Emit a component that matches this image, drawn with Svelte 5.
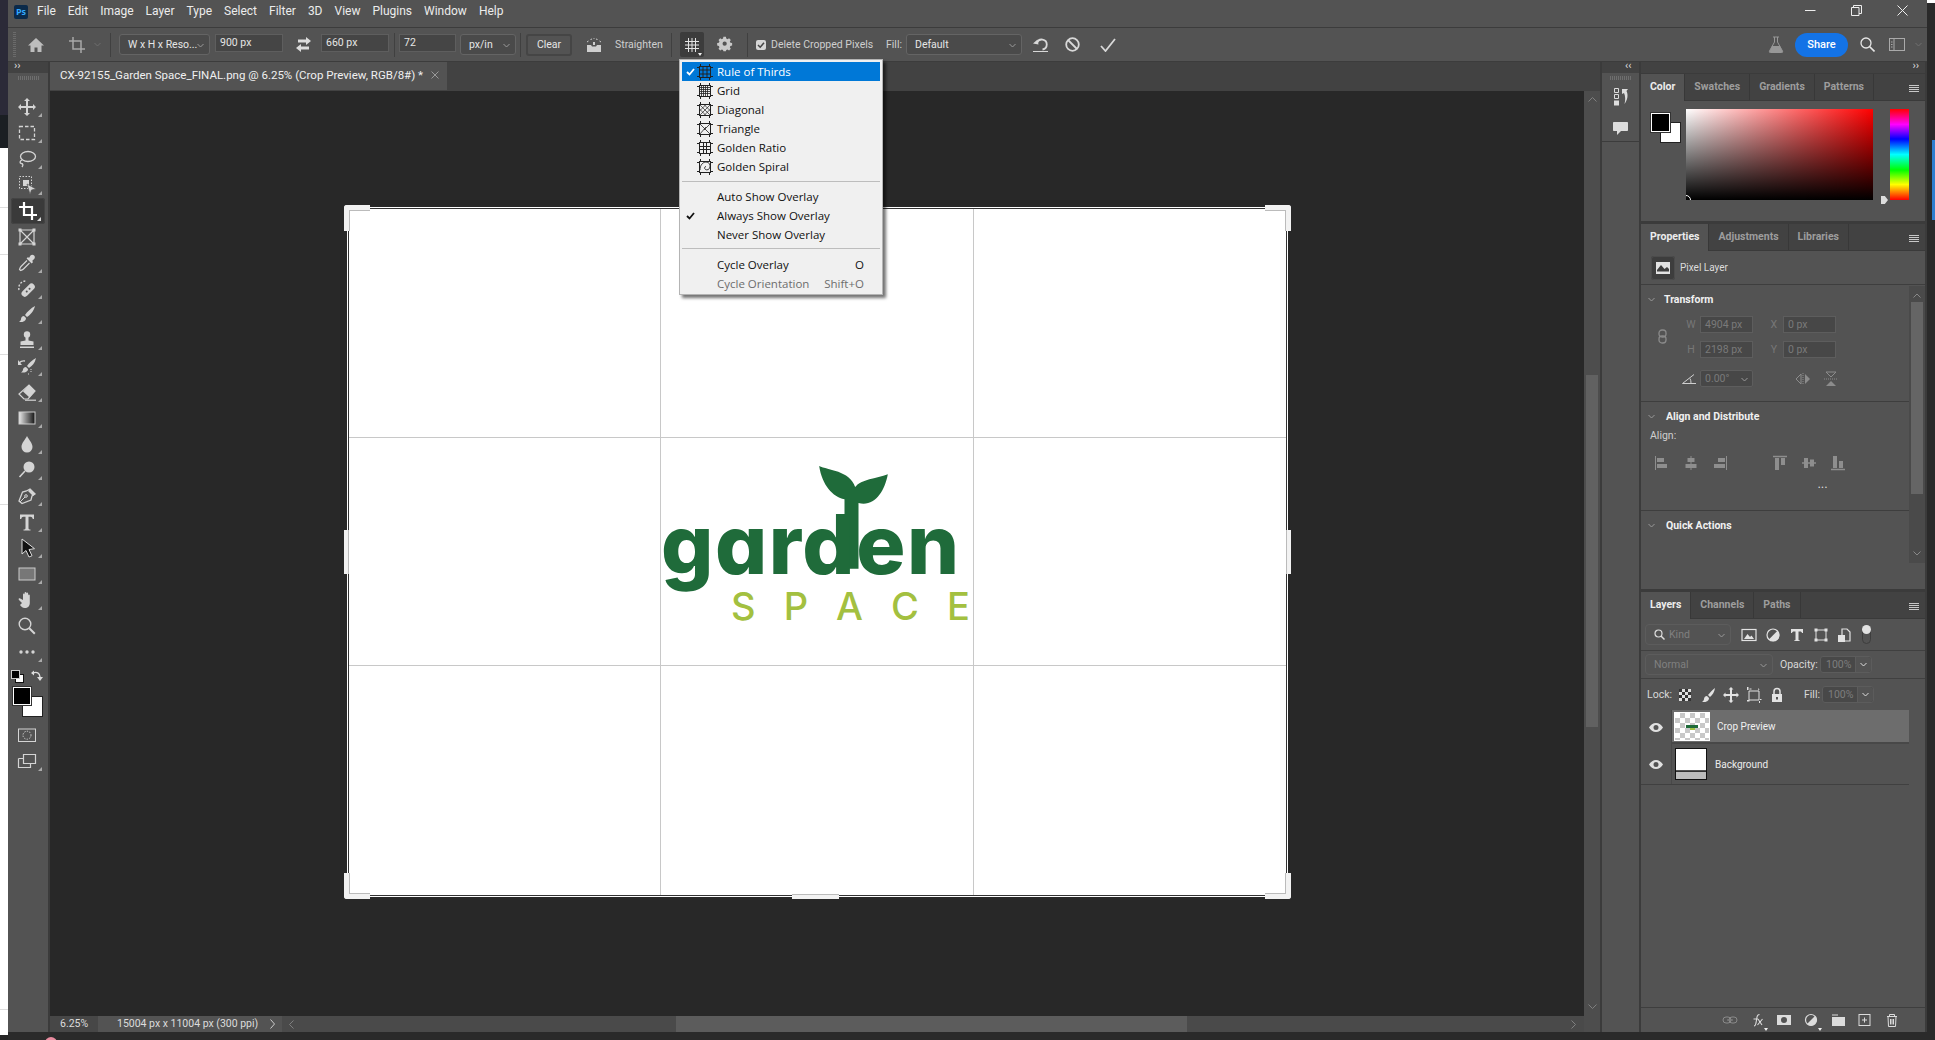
<script>
  const menus = ['File','Edit','Image','Layer','Type','Select','Filter','3D','View','Plugins','Window','Help'];

  const ic = {
    move:'<path fill="currentColor" d="M10 1l3 3h-2v5h5V7l3 3-3 3v-2h-5v5h2l-3 3-3-3h2v-5H4v2l-3-3 3-3v2h5V4H7z"/>',
    marquee:'<rect x="2.500" y="3.500" width="15" height="13" fill="none" stroke="currentColor" stroke-width="1.300" stroke-dasharray="3.500 2"/>',
    lasso:'<ellipse cx="11" cy="7.500" rx="7.500" ry="5" fill="none" stroke="currentColor" stroke-width="1.300"/><path d="M5 11c-2.500 1-2.500 3-.5 3.500 1.500.3 2 1.500.5 3.500" fill="none" stroke="currentColor" stroke-width="1.300"/>',
    obj:'<rect x="2.500" y="1.500" width="12" height="12" fill="none" stroke="currentColor" stroke-dasharray="1.500 1.500"/><rect x="6" y="5" width="6" height="6" fill="currentColor"/><path d="M10 9l9 5-4.500 1-1.500 4.500z" fill="currentColor" stroke="#535353" stroke-width=".7"/>',
    crop:'<path d="M6 1v13h13M1 6h13v13" fill="none" stroke="#fff" stroke-width="2.200"/>',
    frame:'<path d="M3 3h14v14H3zM3 3l14 14M17 3L3 17" fill="none" stroke="currentColor" stroke-width="1.200"/><path fill="currentColor" d="M1.500 1.500h3v3h-3zM15.500 1.500h3v3h-3zM1.500 15.500h3v3h-3zM15.500 15.500h3v3h-3z"/>',
    dropper:'<path fill="currentColor" d="M13.500 2.500c1-1 2.600-1 3.600 0s1 2.600 0 3.600l-2 2 1 1-1.500 1.500-5-5L11 4l1 1z"/><path d="M10 7.500l-6 6c-1 1-1 2-1.500 3l1 1c1-.5 2-.5 3-1.500l6-6" fill="none" stroke="currentColor" stroke-width="1.200"/>',
    heal:'<g transform="rotate(-45 11 11)"><rect x="3" y="8" width="16" height="6.500" rx="3.200" fill="currentColor"/><circle cx="9" cy="11.200" r="1" fill="#535353"/><circle cx="13" cy="11.200" r="1" fill="#535353"/></g><path d="M2 11C1 6 4 2 9 2" fill="none" stroke="currentColor" stroke-width="1.400" stroke-dasharray="2 1.500"/>',
    brush:'<path fill="currentColor" d="M18 2C14 4 10 8 8 11l2 2c3-2 7-6 8-11zM7 12c-2 0-3 1.500-3 3 0 1-.6 2-2 3 3 .5 7-.5 7-4z"/>',
    stamp:'<circle cx="10" cy="4.500" r="3.200" fill="currentColor"/><path fill="currentColor" d="M8.500 7h3v3.500l5 1V15h-13v-3.500l5-1zM3 16.500h14V18H3z"/>',
    history:'<path fill="currentColor" d="M19 2c-4 2-7 5-9 8l2 2c3-2 6-5 7-10zM9 11c-2 0-3 1.500-3 2.500 0 1-.6 2-2 3 3 .5 7-.5 7-3.500z"/><path d="M8 5c-2-.5-4 0-6 2" fill="none" stroke="currentColor" stroke-width="1.300"/><path fill="currentColor" d="M1 4l4 5H1z"/><path d="M14 13v3m-2 2h-2" stroke="currentColor" stroke-dasharray="1 1" fill="none"/>',
    eraser:'<path d="M2 12l5 5h4l7-8-6-6z" fill="none" stroke="currentColor" stroke-width="1.200"/><path fill="currentColor" d="M12 3l6 6-5.500 6.500-6.500-6z"/><path d="M8 18.200h11" stroke="currentColor" stroke-width="1.200"/>',
    gradient:'<defs><linearGradient id="gr"><stop offset="0" stop-color="#e8e8e8"/><stop offset="1" stop-color="#111"/></linearGradient></defs><rect x="2" y="4" width="16" height="12" fill="url(#gr)" stroke="#ccc"/>',
    drop:'<path fill="currentColor" d="M10 2c2 4 5.500 7 5.500 11a5.500 5.500 0 0 1-11 0C4.500 9 8 6 10 2z"/>',
    dodge:'<circle cx="12" cy="7" r="5.500" fill="currentColor"/><path d="M8 11l-5.500 6" stroke="currentColor" stroke-width="1.600"/>',
    pen:'<path d="M13 3l5 5-3 2-1 4-9 3.500L2 15 5.500 6 9.500 5z" fill="none" stroke="currentColor" stroke-width="1.300"/><path d="M13 3l5 5-2 2-5-5z" fill="currentColor"/><path d="M3 16l5-5" stroke="currentColor"/><circle cx="9" cy="10" r="1.300" fill="none" stroke="currentColor"/>',
    type:'<path fill="currentColor" d="M3 2.500h14V7h-1.200c-.4-1.500-1-2.300-2.300-2.300h-2v11.500c0 1 .6 1.200 2 1.200v1H6.500v-1c1.400 0 2-.2 2-1.200V4.700h-2c-1.300 0-1.900.8-2.300 2.300H3z"/>',
    path:'<path d="M5 1v15l4-3.500 3 6.500 3-1.300-3-6.200 5.500-.8z" fill="#111" stroke="#ddd" stroke-width="1"/>',
    rect:'<rect x="2" y="4" width="16" height="12" fill="#777" stroke="#ccc"/>',
    hand:'<path fill="currentColor" d="M5 13l-3-3c-1-1 0-2.200 1.200-1.500L6 10V4.500c0-1.200 1.600-1.200 1.600 0V9V3c0-1.200 1.800-1.200 1.800 0v6V3.500c0-1.200 1.700-1.200 1.700 0V10V5.500c0-1.200 1.700-1.200 1.700 0V13c0 3-2 5-5 5-2.500 0-3.700-1.500-4.800-3z"/>',
    zoom:'<circle cx="8" cy="8" r="5.800" fill="none" stroke="currentColor" stroke-width="1.400"/><path d="M12.300 12.300l5.500 5.500" stroke="currentColor" stroke-width="2"/>',
    dots:'<g fill="currentColor"><circle cx="4" cy="10" r="1.700"/><circle cx="10" cy="10" r="1.700"/><circle cx="16" cy="10" r="1.700"/></g>',
    qmask:'<rect x="1.500" y="4" width="17" height="12.500" fill="none" stroke="currentColor"/><circle cx="10" cy="10.200" r="4" fill="none" stroke="currentColor" stroke-dasharray="1.300 1.300"/>',
    screen:'<path d="M6.500 3.500h12v9h-12zM1.500 7.500h5M1.500 7.500v9h12v-4" fill="none" stroke="currentColor" stroke-width="1.200"/>'
  };

  const tools = [
    ['move',1],['marquee',1],['lasso',1],['obj',1],['crop',1,true],['frame',0],['dropper',1],['heal',1],['brush',1],['stamp',1],['history',1],['eraser',1],['gradient',1],['drop',1],['dodge',1],['pen',1],['type',1],['path',1],['rect',1],['hand',1],['zoom',0],['dots',1]
  ];

  const ticks = '<path d="M3.500 0v3M12.500 0v3M3.500 13v3M12.500 13v3M0 3.500h3M0 12.500h3M13 3.500h3M13 12.500h3" stroke="#222"/><rect x="2.500" y="2.500" width="11" height="11" fill="none" stroke="#222"/>';
  const overlay = [
    ['Rule of Thirds','<path d="M6 2.500v11M10 2.500v11M2.500 6h11M2.500 10h11" stroke="#222"/>',true],
    ['Grid','<path d="M4.500 2.500v11M6.500 2.500v11M8.500 2.500v11M10.500 2.500v11M2.500 4.500h11M2.500 6.500h11M2.500 8.500h11M2.500 10.500h11" stroke="#222" stroke-width=".8"/>'],
    ['Diagonal','<path d="M2.500 2.500l11 11M13.500 2.500l-11 11M2.500 7l6.500 6.500M7 2.500l6.500 6.500M13.500 7L7 13.500M9 2.500L2.500 9" stroke="#222" stroke-width=".7"/>'],
    ['Triangle','<path d="M2.500 2.500l11 11M2.500 13.500L9 6M13.500 2.500L7 9" stroke="#222" stroke-width=".8"/>'],
    ['Golden Ratio','<path d="M6.500 2.500v11M9.500 2.500v11M2.500 6.500h11M2.500 9.500h11" stroke="#222"/>'],
    ['Golden Spiral','<path d="M3 11c0-5 3-8 6-8s4.500 2.500 4 5-3 3.500-4.500 2.500-1-3 .5-3" fill="none" stroke="#222" stroke-width=".9"/>']
  ];

  const alignIcons = [
    '<path d="M1.500 1v14" stroke="currentColor"/><path fill="currentColor" d="M3 3h7v4H3zM3 9h10v4H3z"/>',
    '<path d="M8 1v14" stroke="currentColor"/><path fill="currentColor" d="M4.500 3h7v4h-7zM2.500 9h11v4h-11z"/>',
    '<path d="M14.500 1v14" stroke="currentColor"/><path fill="currentColor" d="M6 3h7v4H6zM2 9h11v4H2z"/>',
    '<path d="M1 1.500h14" stroke="currentColor" stroke-width="1.500"/><path fill="currentColor" d="M3 3h4v12H3zM9 3h4v7H9z"/>',
    '<path d="M1 8h14" stroke="currentColor" stroke-width="1.500"/><path fill="currentColor" d="M3 3h4v10H3zM9 4.500h4v7H9z"/>',
    '<path d="M1 14.500h14" stroke="currentColor" stroke-width="1.500"/><path fill="currentColor" d="M3 1h4v12H3zM9 6h4v7H9z"/>'
  ];
  const filterIcons = [
    '<rect x="1" y="2.500" width="14" height="11" fill="none" stroke="currentColor" stroke-width="1.200"/><path fill="currentColor" d="M3 12l3.500-5 2.500 3 1.500-1.500L13 12z"/>',
    '<circle cx="8" cy="8" r="6" fill="none" stroke="currentColor" stroke-width="1.200"/><path fill="currentColor" d="M12.500 3.800A6 6 0 0 1 3.800 12.500z"/>',
    '<path fill="currentColor" d="M2 2h12v4h-1c-.3-1-.8-1.500-1.800-1.500H9.500v8c0 .8.500 1 1.500 1V14H5v-.5c1 0 1.500-.2 1.500-1v-8H4.800C3.800 4.500 3.300 5 3 6H2z"/>',
    '<path d="M3 3h10v10H3z" fill="none" stroke="currentColor"/><path fill="currentColor" d="M1.500 1.500h3v3h-3zM11.500 1.500h3v3h-3zM1.500 11.500h3v3h-3zM11.500 11.500h3v3h-3z"/>',
    '<path d="M5 8V2h5l3 3v9H8" fill="none" stroke="currentColor" stroke-width="1.200"/><rect x="1" y="8" width="7" height="7" fill="currentColor"/>'
  ];
  const lockIcons = [
    '<path fill="#ddd" d="M2 2h12v12H2z"/><path fill="#333" d="M2 2h3v3H2zM8 2h3v3H8zM5 5h3v3H5zM11 5h3v3h-3zM2 8h3v3H2zM8 8h3v3H8zM5 11h3v3H5zM11 11h3v3h-3z"/>',
    '<path fill="currentColor" d="M15 1c-2.500 2-5 4.500-7 7l2 2c2.500-2 4.500-5 5-9zM7 9c-2 0-3 1.500-3 3 0 1-.6 2-2 3 3 .5 7-.5 7-4z"/>',
    '<path fill="currentColor" d="M8 0l2.500 2.500H9V7h4.500V5.500L16 8l-2.500 2.500V9H9v4.500h1.500L8 16l-2.500-2.500H7V9H2.500v1.500L0 8l2.500-2.500V7H7V2.500H5.500z"/>',
    '<path d="M3 4h10v9H3z" fill="none" stroke="currentColor"/><path fill="currentColor" d="M1 0h1.500v3H1zM3.500 1.500h2v1h-2zM12 1l1.500 1.500-1 1zM1 13h2.500v1.500H1zM14 12h1.500v1H14zM13 14h1v2h-1z"/>',
    '<path d="M5 7V4.500a3 3 0 0 1 6 0V7" fill="none" stroke="currentColor" stroke-width="1.500"/><path fill="currentColor" fill-rule="evenodd" d="M3 7h10v8H3zM7 10v2.500h2V10z"/>'
  ];
  const footIcons = [
    ['<rect x="1" y="5" width="8" height="6" rx="3" fill="none" stroke="#8a8a8a"/><rect x="7" y="5" width="8" height="6" rx="3" fill="none" stroke="#8a8a8a"/><path d="M5 8h6" stroke="#8a8a8a"/>',0],
    ['<path d="M5 14c1.500 0 1.500-1 2-3l1-6c.3-1.500 1-2.500 2.500-2.500M4.500 7H9M9 7l4 6M13.500 7L8.500 13" fill="none" stroke="currentColor" stroke-width="1.100"/>',1],
    ['<path fill="#dcdcdc" fill-rule="evenodd" d="M1 3h14v10H1zM8 5a3 3 0 1 0 0 6 3 3 0 0 0 0-6z"/>',0],
    ['<circle cx="8" cy="8" r="5.500" fill="none" stroke="currentColor" stroke-width="1.200"/><path fill="currentColor" d="M12 4A5.500 5.500 0 0 1 4 12z"/>',1],
    ['<path fill="#dcdcdc" d="M2 2.500h6v1H2zM2 5h13v9H2z"/>',0],
    ['<rect x="2" y="2.500" width="11" height="11" fill="none" stroke="currentColor"/><path d="M7.500 5.500v5M5 8h5" stroke="currentColor"/>',0],
    ['<path d="M3 4.500h10M5.500 4.500V2.500h5v2M4 4.500l.5 10h7l.5-10M6.500 7v5.500M8 7v5.500M9.500 7v5.500" fill="none" stroke="currentColor"/>',0]
  ];
</script>

{#snippet tabs(list)}
  <div class="tabs">
    {#each list as t, i}
      <div class="tab" class:on={i === 0}>{t}</div>
    {/each}
    <svg class="hamb" width="10" height="8" viewBox="0 0 10 8"><path d="M0 .5h10M0 2.500h10M0 4.500h10M0 6.500h10" stroke="#c8c8c8"/></svg>
  </div>
{/snippet}

{#snippet chev(cls)}
  <svg class={cls} width="7" height="5" viewBox="0 0 7 5"><path d="M.5 1l3 3 3-3" fill="none" stroke="#999"/></svg>
{/snippet}

<div class="app">
  <div class="edge-left">
    <div class="el-a"></div><div class="el-b"></div>
    <div class="el-w l1"></div><div class="el-w l2"></div><div class="el-w l3"></div><div class="el-w l4"></div><div class="el-w l5"></div><div class="el-w l6"></div>
    <div class="el-d"></div>
  </div>

  <div class="center">
    <div class="window">
      <header class="title">
        <div class="ps">Ps</div>
        <nav class="menus">{#each menus as m}<span>{m}</span>{/each}</nav>
        <div class="winbtns">
          <svg width="11" height="11" viewBox="0 0 11 11"><path d="M0 5.500h10.500" stroke="#eee"/></svg>
          <svg width="11" height="11" viewBox="0 0 11 11"><path d="M.5 2.500h7.500v8H.5zM2.500 2.500V.5h8v8H8" fill="none" stroke="#eee"/></svg>
          <svg width="11" height="11" viewBox="0 0 11 11"><path d="M.5.5l10 10M10.500.5l-10 10" stroke="#eee"/></svg>
        </div>
      </header>

      <div class="opts">
        <div class="grip ml5"></div>
        <svg class="ml12" width="16" height="16" viewBox="0 0 16 16"><path fill="#bdbdbd" d="M8 1L0 8.500h2.500V15h4v-4.500h3V15h4V8.500H16z"/></svg>
        <svg class="ml24" width="18" height="18" viewBox="0 0 18 18"><path d="M5 1v12h12M1 5h12v12" fill="none" stroke="#a8a8a8" stroke-width="1.500"/></svg>
        <svg class="ml8" width="7" height="5" viewBox="0 0 7 5"><path d="M.5 1l3 3 3-3" fill="none" stroke="#6e6e6e"/></svg>
        <div class="sep ml9"></div>
        <div class="sel w91 ml8">W x H x Reso...{@render chev('selchev')}</div>
        <div class="inp w68 ml5">900 px</div>
        <svg class="ml12" width="17" height="17" viewBox="0 0 17 17"><path fill="#dcdcdc" d="M11 1l5 4-5 4V6.500H3v-3h8zM6 8l-5 4 5 4v-2.500h8v-3H6z"/></svg>
        <div class="inp w68 ml9">660 px</div>
        <div class="sep ml5"></div>
        <div class="inp w57 ml4">72</div>
        <div class="sel w56 ml4">px/in{@render chev('selchev')}</div>
        <div class="sep ml4"></div>
        <div class="btn ml5">Clear</div>
        <svg class="ml13" width="18" height="18" viewBox="0 0 18 18"><path fill="#cfcfcf" d="M2 9h4l1 1.500h4L12 9h4v7H2z"/><path d="M2 6l1.500-1M5.500 3.500L7 3M9 2v.8M11 3l1.500.5M14.500 5L16 6" stroke="#cfcfcf"/><path fill="#cfcfcf" d="M8 6h2v3H8z"/></svg>
        <span class="otext ml12 w46">Straighten</span>
        <div class="sep ml10"></div>
        <div class="gridbtn ml8">
          <svg width="16" height="16" viewBox="0 0 16 16"><path d="M4.500 1v14M8 1v14M11.500 1v14M1 4.500h14M1 8h14M1 11.500h14" stroke="#e4e4e4"/></svg>
          <i class="mini"></i>
        </div>
        <svg class="ml13" width="18" height="18" viewBox="0 0 18 18"><path fill="#c9c9c9" fill-rule="evenodd" d="M7.500 1h3l.4 2 1.500.7 1.800-1.100 2 2-1.100 1.800.7 1.500 2 .4v3l-2 .4-.7 1.500 1.100 1.800-2 2-1.800-1.100-1.500.7-.4 1.400h-3l-.4-1.400-1.500-.7-1.800 1.100-2-2 1.100-1.800-.7-1.500-2-.4v-3l2-.4.700-1.500-1.100-1.800 2-2 1.800 1.100 1.500-.7zM9 6.500a2.500 2.500 0 1 0 0 5 2.500 2.500 0 0 0 0-5z" transform="scale(.85)"/></svg>
        <div class="sep ml12"></div>
        <svg class="ml8" width="10" height="10" viewBox="0 0 10 10"><rect width="10" height="10" rx="2" fill="#d6d6d6"/><path d="M2 5l2.200 2.200L8 2.800" fill="none" stroke="#444" stroke-width="1.500"/></svg>
        <span class="otext ml5 w96">Delete Cropped Pixels</span>
        <span class="otext ml19 w14">Fill:</span>
        <div class="sel w116 ml6">Default{@render chev('selchev')}</div>
        <svg class="ml10" width="17" height="17" viewBox="0 0 17 17"><path d="M5 7a5 5 0 1 1 5.500 6.500" fill="none" stroke="#d8d8d8" stroke-width="1.800"/><path fill="#d8d8d8" d="M1 7.500l4.500-4 1 5z"/><path d="M1 15.500h15" stroke="#d8d8d8"/></svg>
        <svg class="ml16" width="15" height="15" viewBox="0 0 15 15"><circle cx="7.500" cy="7.500" r="6.300" fill="none" stroke="#d8d8d8" stroke-width="1.800"/><path d="M3 3l9 9" stroke="#d8d8d8" stroke-width="1.800"/></svg>
        <svg class="ml20" width="16" height="14" viewBox="0 0 16 14"><path d="M1 8l4.500 5L15 1" fill="none" stroke="#d8d8d8" stroke-width="1.800"/></svg>
        <svg class="auto" width="16" height="17" viewBox="0 0 16 17"><path d="M5 1h6M6.500 1v5L1.500 15c-.3.8 0 1.500 1 1.500h11c1 0 1.300-.7 1-1.500l-5-9V1" fill="none" stroke="#979797"/><path fill="#979797" d="M4 10h8l3 6.500H1z"/></svg>
        <div class="share ml11">Share</div>
        <svg class="ml12" width="15" height="15" viewBox="0 0 15 15"><circle cx="6" cy="6" r="5" fill="none" stroke="#e6e6e6" stroke-width="1.300"/><path d="M9.500 9.500l5 5" stroke="#e6e6e6" stroke-width="1.600"/></svg>
        <svg class="ml14" width="16" height="13" viewBox="0 0 16 13"><rect x=".5" y=".5" width="15" height="12" fill="none" stroke="#aaa"/><path d="M5 .5v12" stroke="#aaa"/><path d="M2 4h1.500M2 6.500h1.500M2 9h1.500" stroke="#aaa"/></svg>
        <svg class="ml10 mr5" width="7" height="5" viewBox="0 0 7 5"><path d="M.5 1l3 3 3-3" fill="none" stroke="#707070"/></svg>
      </div>

      <div class="work">
        <aside class="tools">
          <div class="head"><span>››</span></div>
          <div class="gripbar"></div>
          <div class="toollist">
            {#each tools as [name, tri, active]}
              <div class="tool" class:active>
                <svg width="20" height="20" viewBox="0 0 20 20">{@html ic[name]}</svg>
                {#if tri}<i class="tri"></i>{/if}
              </div>
            {/each}
          </div>
          <div class="minicolors">
            <div class="defcol"><i class="db"></i><i class="df"></i></div>
            <svg width="12" height="12" viewBox="0 0 12 12"><path d="M2 3c4-1.500 6.500 0 7 4" fill="none" stroke="#ddd" stroke-width="1.400"/><path fill="#ddd" d="M3 .5v5L0 3zM6 7h6l-3 4z"/></svg>
          </div>
          <div class="bigcol"><i class="bb"></i><i class="bf"></i></div>
          <div class="tool q"><svg width="20" height="20" viewBox="0 0 20 20">{@html ic.qmask}</svg></div>
          <div class="tool q2"><svg width="20" height="20" viewBox="0 0 20 20">{@html ic.screen}</svg><i class="tri"></i></div>
        </aside>

        <main class="doc">
          <div class="tabbar">
            <div class="doctab">CX-92155_Garden Space_FINAL.png @ 6.25% (Crop Preview, RGB/8#) * <svg width="8" height="8" viewBox="0 0 8 8"><path d="M.5.5l7 7M7.500.5l-7 7" stroke="#999"/></svg></div>
          </div>
          <div class="docmid">
            <div class="pasteboard">
              <div class="image">
                {#each Array(9) as _}<div class="cell"></div>{/each}
                <div class="logo">
                  <svg class="leaf" viewBox="540 60 230 330" width="77" height="110"><path fill="#1f6b3a" d="M549 72C575 85 640 85 657 135 675 112 720 110 755 97 745 150 715 195 667 183V380H625V172C590 165 558 130 549 72Z"/></svg>
                  <div class="garden">garden</div>
                  <div class="space"><span>S</span><span>P</span><span>A</span><span>C</span><span>E</span></div>
                </div>
                <i class="hd tl"></i><i class="hd tr"></i><i class="hd bl"></i><i class="hd br"></i>
                <i class="mid ml"></i><i class="mid mr"></i><i class="mid mt"></i><i class="mid mb"></i>
              </div>
            </div>
            <div class="vscroll">
              <svg width="9" height="5" viewBox="0 0 9 5"><path d="M.5 4.500l4-4 4 4" fill="none" stroke="#808080"/></svg>
              <div class="vthumb"></div>
              <svg class="vdown" width="9" height="5" viewBox="0 0 9 5"><path d="M.5.5l4 4 4-4" fill="none" stroke="#808080"/></svg>
            </div>
          </div>
          <div class="status">
            <div class="zoomv">6.25%</div>
            <div class="dims">15004 px x 11004 px (300 ppi)<svg width="5" height="10" viewBox="0 0 5 10"><path d="M.5.5l4 4.500-4 4.500" fill="none" stroke="#ccc"/></svg></div>
            <div class="hscroll">
              <svg width="5" height="9" viewBox="0 0 5 9"><path d="M4.500.5l-4 4 4 4" fill="none" stroke="#808080"/></svg>
              <div class="hthumb"></div>
              <svg class="hright" width="5" height="9" viewBox="0 0 5 9"><path d="M.5.5l4 4-4 4" fill="none" stroke="#808080"/></svg>
            </div>
            <div class="corner"></div>
          </div>
        </main>

        <div class="strip">
          <div class="head right"><span>‹‹</span></div>
          <div class="stripbox">
            <div class="gripbar"></div>
            <svg class="sico" width="17" height="18" viewBox="0 0 17 18"><path d="M.5 .5h4v4h-4zM.5 6.500h4v4h-4z" fill="none" stroke="#ddd"/><path fill="#ddd" d="M0 12.500h5v5H0z"/><path d="M8 1h6l-1.500 2c2 4 1 9-2 13 1-4 1-8-.5-11L8 6z" fill="#ddd"/></svg>
            <svg class="sico2" width="15" height="13" viewBox="0 0 15 13"><path fill="#ddd" d="M1 0h13c.6 0 1 .4 1 1v7c0 .6-.4 1-1 1H8l-4 4V9H1C.4 9 0 8.600 0 8V1C0 .4.400 0 1 0z"/></svg>
          </div>
        </div>

        <section class="panels">
          <div class="head right2"><span>››</span></div>

          <div class="panel color">
            {@render tabs(['Color','Swatches','Gradients','Patterns'])}
            <div class="colorbody">
              <div class="swatch"><i class="sb"></i><i class="sf"></i></div>
              <div class="sv"><i class="svdot"></i></div>
              <div class="hue"><i class="huetri"></i></div>
            </div>
          </div>

          <div class="panel props">
            {@render tabs(['Properties','Adjustments','Libraries'])}
            <div class="pixrow">
              <div class="pixic"><svg width="14" height="12" viewBox="0 0 14 12"><path fill="#e2e2e2" fill-rule="evenodd" d="M0 0h14v12H0zM1 9.500h12V7l-2-2-2.500 2L5 3 1 8z"/></svg></div>
              <span>Pixel Layer</span>
            </div>
            <div class="propsbody">
              <div class="sections">
                <div class="sec tf">
                  <div class="sechead">{@render chev('secchev')}<b>Transform</b></div>
                  <div class="tfgrid">
                    <svg class="chain" width="9" height="15" viewBox="0 0 9 15"><rect x="1" y="1" width="7" height="7" rx="3" fill="none" stroke="#8a8a8a" stroke-width="1.300"/><rect x="1" y="7" width="7" height="7" rx="3" fill="none" stroke="#8a8a8a" stroke-width="1.300"/></svg>
                    <div class="tfrows">
                      <div class="tfrow"><span class="tl1">W</span><div class="dis">4904 px</div><span class="tl2">X</span><div class="dis">0 px</div></div>
                      <div class="tfrow"><span class="tl1">H</span><div class="dis">2198 px</div><span class="tl2">Y</span><div class="dis">0 px</div></div>
                      <div class="tfrow ang">
                        <svg class="angle" width="14" height="10" viewBox="0 0 14 10"><path d="M12 .5L.5 9.500H14M8 4.500c.8 1.200 1 3 1 5" fill="none" stroke="#cfcfcf"/></svg>
                        <div class="dis dd">0.00°{@render chev('ddchev')}</div>
                        <svg class="flip1" width="16" height="12" viewBox="0 0 16 12"><path d="M6 1v10L1 6z" fill="none" stroke="#8c8c8c"/><path fill="#8c8c8c" d="M10 1v10l5-5z"/><path d="M8 0v12" stroke="#8c8c8c" stroke-dasharray="1 1"/></svg>
                        <svg class="flip2" width="14" height="16" viewBox="0 0 14 16"><path d="M2 1h10L7 6z" fill="none" stroke="#8c8c8c"/><path fill="#8c8c8c" d="M2 15h10l-5-5z"/><path d="M0 8h14" stroke="#8c8c8c" stroke-dasharray="1 1"/></svg>
                      </div>
                    </div>
                  </div>
                </div>
                <div class="sec al">
                  <div class="sechead">{@render chev('secchev')}<b class="b2">Align and Distribute</b></div>
                  <div class="allabel">Align:</div>
                  <div class="alicons">
                    {#each alignIcons as a}<svg width="16" height="16" viewBox="0 0 16 16">{@html a}</svg>{/each}
                  </div>
                  <div class="more">•••</div>
                </div>
                <div class="sec qa">
                  <div class="sechead">{@render chev('secchev')}<b class="b2">Quick Actions</b></div>
                </div>
              </div>
              <div class="pscroll">
                <svg width="8" height="5" viewBox="0 0 8 5"><path d="M.5 4.500L4 1l3.500 3.500" fill="none" stroke="#888"/></svg>
                <div class="pthumb"></div>
                <svg class="pdown" width="8" height="5" viewBox="0 0 8 5"><path d="M.5.5L4 4l3.500-3.500" fill="none" stroke="#888"/></svg>
              </div>
            </div>
          </div>

          <div class="panel layers">
            {@render tabs(['Layers','Channels','Paths'])}
            <div class="lrow filter">
              <div class="kind">
                <svg width="11" height="11" viewBox="0 0 11 11"><circle cx="4.500" cy="4.500" r="3.500" fill="none" stroke="#ddd" stroke-width="1.200"/><path d="M7 7l3.500 3.500" stroke="#ddd" stroke-width="1.500"/></svg>
                <span>Kind</span>{@render chev('selchev')}
              </div>
              <div class="ficons">{#each filterIcons as f}<svg width="16" height="16" viewBox="0 0 16 16">{@html f}</svg>{/each}</div>
              <div class="toggle"><i></i></div>
            </div>
            <div class="lrow blend">
              <div class="normal">Normal{@render chev('selchev')}</div>
              <span class="lab op">Opacity:</span>
              <div class="pct">100%<em>{@render chev('pctchev')}</em></div>
            </div>
            <div class="lrow lock">
              <span class="lab lk">Lock:</span>
              <div class="lockicons">{#each lockIcons as l}<svg width="16" height="16" viewBox="0 0 16 16">{@html l}</svg>{/each}</div>
              <span class="lab fl">Fill:</span>
              <div class="pct">100%<em>{@render chev('pctchev')}</em></div>
            </div>
            <div class="list">
              <div class="layer one">
                <div class="eye"><svg width="14" height="9" viewBox="0 0 14 9"><path fill="#e0e0e0" fill-rule="evenodd" d="M7 0c3 0 5.500 2 7 4.500C12.500 7 10 9 7 9S1.500 7 0 4.500C1.500 2 4 0 7 0zM7 2a2.500 2.500 0 1 0 0 5 2.500 2.500 0 0 0 0-5z"/></svg></div>
                <div class="lbody sel1">
                  <div class="thumb1"><i class="tiny"></i><i class="tinyb"></i></div>
                  <span>Crop Preview</span>
                </div>
              </div>
              <div class="layer two">
                <div class="eye"><svg width="14" height="9" viewBox="0 0 14 9"><path fill="#e0e0e0" fill-rule="evenodd" d="M7 0c3 0 5.500 2 7 4.500C12.500 7 10 9 7 9S1.500 7 0 4.500C1.500 2 4 0 7 0zM7 2a2.500 2.500 0 1 0 0 5 2.500 2.500 0 0 0 0-5z"/></svg></div>
                <div class="lbody">
                  <div class="thumb2"><i></i></div>
                  <span>Background</span>
                </div>
              </div>
            </div>
            <div class="lfoot">
              {#each footIcons as [f, m]}
                <div class="fi"><svg width="16" height="16" viewBox="0 0 16 16">{@html f}</svg>{#if m}<i class="mini"></i>{/if}</div>
              {/each}
            </div>
          </div>
        </section>
      </div>
    </div>
    <div class="taskbar"><i class="pink"></i></div>
  </div>

  <div class="edge-right"><i class="er-w"></i><i class="er-blue"></i></div>

  <div class="popup">
    {#each overlay as [label, art, sel]}
      <div class="pi" class:hi={sel}>
        <span class="ck">{#if sel}<svg width="9" height="8" viewBox="0 0 9 8"><path d="M1 4l2.500 2.500L8 1" fill="none" stroke="#fff" stroke-width="1.800"/></svg>{/if}</span>
        <svg class="pic" width="16" height="16" viewBox="0 0 16 16">{@html ticks + art}</svg>
        <span class="pt">{label}</span>
      </div>
    {/each}
    <div class="psep"></div>
    <div class="pi"><span class="ck"></span><span class="noic"></span><span class="pt">Auto Show Overlay</span></div>
    <div class="pi"><span class="ck"><svg width="9" height="8" viewBox="0 0 9 8"><path d="M1 4l2.500 2.500L8 1" fill="none" stroke="#111" stroke-width="1.800"/></svg></span><span class="noic"></span><span class="pt">Always Show Overlay</span></div>
    <div class="pi"><span class="ck"></span><span class="noic"></span><span class="pt">Never Show Overlay</span></div>
    <div class="psep s2"></div>
    <div class="pi"><span class="ck"></span><span class="noic"></span><span class="pt">Cycle Overlay</span><span class="sc">O</span></div>
    <div class="pi dim"><span class="ck"></span><span class="noic"></span><span class="pt">Cycle Orientation</span><span class="sc">Shift+O</span></div>
  </div>
</div>

<style>
  :global(body){margin:0;overflow:hidden;background:#262626}
  .app{position:relative;width:1935px;height:1040px;display:flex;overflow:hidden;font-family:Roboto,"Noto Sans",sans-serif;color:#e4e4e4;font-size:11px}
  i{display:block;font-style:normal}

  .edge-left{width:8px;display:flex;flex-direction:column;flex:none}
  .el-a{height:115px;background:#2b2a38}
  .el-b{height:33px;background:#1b1f23}
  .el-w{background:#fff;border-bottom:1px solid #ddd}
  .l1{height:59px}.l2{height:46px}.l3{height:99px}.l4{height:149px}.l5{height:504px}.l6{height:25px;border:0}
  .el-d{flex:1;background:#262626}

  .center{width:1919px;display:flex;flex-direction:column;flex:none}
  .window{height:1032px;display:flex;flex-direction:column;background:#3b3b3b}
  .taskbar{flex:1;background:#2a2a2a;position:relative}
  .pink{position:absolute;left:37px;top:5px;width:12px;height:12px;border-radius:50%;background:#e98ca0}
  .edge-right{width:8px;flex:none;background:#2a2a2a;position:relative}
  .er-w{height:3px;background:#fff}
  .er-blue{position:absolute;left:5px;top:140px;width:3px;height:80px;background:#2f7fd0}

  .title{height:28px;box-sizing:border-box;background:#535353;border-bottom:1px solid #3c3c3c;display:flex;align-items:flex-start}
  .ps{width:14px;height:14px;margin:5px 0 0 6px;background:#0b2a4a;color:#31a8ff;font:700 9px/14px "Open Sans",sans-serif;text-align:center;border-radius:2px}
  .menus{display:flex;gap:12px;margin:3px 0 0 9px;font-size:12px;line-height:16px;color:#ececec}
  .winbtns{margin-left:auto;display:flex;gap:35px;padding:5px 19px 0 0}

  .opts{height:34px;box-sizing:border-box;background:#535353;border-bottom:1px solid #3c3c3c;display:flex;align-items:center;flex:none}
  .opts>*{flex:none}
  .ml4{margin-left:4px}.ml5{margin-left:5px}.ml6{margin-left:6px}.ml8{margin-left:8px}.ml9{margin-left:9px}.ml10{margin-left:10px}.ml11{margin-left:11px}.ml12{margin-left:12px}.ml13{margin-left:13px}.ml14{margin-left:14px}.ml16{margin-left:16px}.ml19{margin-left:19px}.ml20{margin-left:20px}.ml24{margin-left:24px}
  .mr5{margin-right:5px}.auto{margin-left:auto}
  .w14{width:14px}.w46{width:46px}.w56{width:56px}.w57{width:57px}.w68{width:68px}.w91{width:91px}.w96{width:96px}.w116{width:116px}
  .grip{width:3px;height:26px;background:repeating-linear-gradient(#6b6b6b 0 1px,transparent 1px 2px)}
  .sep{width:1px;height:24px;background:#404040}
  .sel{position:relative;height:21px;box-sizing:border-box;border:1px solid #646464;border-radius:3px;padding:0 8px;line-height:19px;font-size:10.500px;color:#e6e6e6;background:#4a4a4a}
  :global(.selchev){position:absolute;right:5px;top:8px}
  .inp{height:18px;box-sizing:border-box;background:#454545;border:1px solid #5e5e5e;padding:0 4px;line-height:16px;font-size:10.500px;color:#e6e6e6;margin-bottom:3px}
  .btn{width:46px;height:22px;box-sizing:border-box;border:2px solid #454545;border-radius:3px;text-align:center;line-height:18px;font-size:10.500px;color:#e6e6e6}
  .otext{font-size:10.500px;color:#cfcfcf;white-space:nowrap}
  .gridbtn{width:24px;height:25px;background:#3c3c3c;border-radius:2px;display:flex;align-items:center;justify-content:center;position:relative}
  .mini{position:absolute;right:2px;bottom:1px;width:0;height:0;border:2.500px solid transparent;border-top:3px solid #eee;border-bottom:0}
  .share{width:53px;height:24px;border-radius:12px;background:#1473e6;color:#fff;text-align:center;line-height:24px;font-size:11px;font-weight:500}

  .work{flex:1;display:flex;gap:2px;min-height:0}
  .head{height:11px;background:#424242;font-size:11px;line-height:8px;color:#ddd;padding-left:6px;flex:none}
  .head.right{padding-left:23px}
  .head.right2{text-align:right;padding-right:6px}

  .tools{width:40px;flex:none;background:#535353;display:flex;flex-direction:column}
  .gripbar{height:4px;margin:3px auto 0;width:21px;background:repeating-linear-gradient(90deg,#6e6e6e 0 1px,transparent 1px 2px);flex:none}
  .toollist{padding-top:14px}
  .tool{position:relative;height:25.950px;display:flex;align-items:center;justify-content:center;color:#d4d4d4;padding-right:2px}
  .tool.active{background:#3a3a3a;border-radius:3px;margin:0 3px;padding-right:0;box-shadow:0 0 0 1px #444 inset}
  .tri{position:absolute;right:6px;bottom:3px;width:0;height:0;border-style:solid;border-width:0 0 4px 4px;border-color:transparent transparent #aaa transparent}
  .active .tri{right:4px;border-bottom-color:#ddd}
  .minicolors{display:flex;align-items:center;gap:8px;padding:4px 0 0 3px;height:14px;flex:none}
  .defcol{position:relative;width:12px;height:12px}
  .db{position:absolute;left:4px;top:4px;width:7px;height:7px;background:#fff;border:1px solid #111}
  .df{position:absolute;left:0;top:0;width:7px;height:7px;background:#000;border:1px solid #ccc}
  .bigcol{position:relative;height:30px;margin-top:4px;flex:none}
  .bb{position:absolute;left:14px;top:9px;width:19px;height:19px;background:#fff;border:1px solid #222}
  .bf{position:absolute;left:5px;top:0;width:16px;height:16px;background:#000;border:1px solid #fff;box-shadow:0 0 0 1px #333}
  .q{margin-top:5px}

  .doc{width:1550px;flex:none;display:flex;flex-direction:column}
  .tabbar{height:29px;background:#424242;flex:none}
  .doctab{width:397px;height:28px;box-sizing:border-box;background:#535353;font-size:11.500px;line-height:27px;padding-left:10px;color:#f0f0f0;white-space:nowrap}
  .doctab svg{margin-left:5px}
  .docmid{flex:1;display:flex;min-height:0}
  .pasteboard{flex:1;background:#282828;position:relative}
  .vscroll{width:16px;background:#4d4d4d;display:flex;flex-direction:column;align-items:center;padding-top:6px;box-sizing:border-box}
  .vthumb{width:12px;height:352px;background:#616161;margin-top:273px}
  .vdown{margin-top:auto;margin-bottom:7px}
  .status{height:16px;display:flex;flex:none;font-size:10.500px;line-height:16px;color:#dcdcdc}
  .zoomv{width:38px;padding-left:10px;background:#474747}
  .dims{width:165px;padding-left:19px;background:#535353;position:relative;white-space:nowrap}
  .dims svg{position:absolute;right:7px;top:3px}
  .hscroll{flex:1;background:#4a4a4a;display:flex;align-items:center;padding:0 8px 0 7px}
  .hthumb{width:511px;height:16px;background:#5c5c5c;margin-left:382px}
  .hright{margin-left:auto}
  .corner{width:16px;background:#4d4d4d}

  .image{position:absolute;left:299px;top:118px;width:937px;height:686px;background:#fff;display:grid;grid-template-columns:repeat(3,1fr);grid-template-rows:repeat(3,1fr);box-shadow:0 0 0 1px #333,0 0 0 2px #fff}
  .cell{border-right:1px solid #c8c8c8;border-bottom:1px solid #c8c8c8}
  .cell:nth-child(3n){border-right:0}
  .cell:nth-child(n+7){border-bottom:0}
  .hd{position:absolute;width:21px;height:21px;border:solid #f2f2f2;border-width:0;box-sizing:content-box}
  .tl{left:-5px;top:-4px;border-left-width:5px;border-top-width:5px;border-top-left-radius:3px;box-shadow:inset 1px 1px 0 #bbb}
  .tr{right:-5px;top:-4px;border-right-width:5px;border-top-width:5px;border-top-right-radius:3px;box-shadow:inset -1px 1px 0 #bbb}
  .bl{left:-5px;bottom:-4px;border-left-width:5px;border-bottom-width:5px;border-bottom-left-radius:3px;box-shadow:inset 1px -1px 0 #bbb}
  .br{right:-5px;bottom:-4px;border-right-width:5px;border-bottom-width:5px;border-bottom-right-radius:3px;box-shadow:inset -1px -1px 0 #bbb}
  .mid{position:absolute;background:#f2f2f2}
  .ml,.mr{width:5px;height:44px;top:321px}
  .ml{left:-5px;box-shadow:inset -1px 0 0 #bbb}
  .mr{right:-5px;box-shadow:inset 1px 0 0 #bbb}
  .mt,.mb{height:5px;width:47px;left:443px}
  .mt{top:-4px}
  .mb{bottom:-4px;box-shadow:inset 0 1px 0 #bbb}

  .logo{position:absolute;left:314px;top:259px;width:307px;height:155px}
  .leaf{position:absolute;left:153px;top:-6px}
  .garden{position:absolute;left:-2px;top:27px;font:800 82px/100px Inter,sans-serif;font-feature-settings:"cv11";color:#1f6b3a;letter-spacing:1.500px;white-space:nowrap}
  .space{position:absolute;left:68px;top:124px;width:239px;display:flex;justify-content:space-between;font:500 38px/28px Inter,sans-serif;color:#a3c040}

  .strip{width:37px;flex:none;background:#424242;display:flex;flex-direction:column}
  .stripbox{flex:1;background:#535353;display:flex;flex-direction:column;align-items:center;position:relative}
  .stripbox::after{content:"";position:absolute;left:0;right:0;top:68px;height:1px;background:#3c3c3c}
  .sico{margin-top:8px;margin-left:4px}
  .sico2{margin-top:16px}

  .panels{width:284px;flex:none;display:flex;flex-direction:column;gap:0}
  .panel{background:#535353;display:flex;flex-direction:column;flex:none;box-sizing:border-box}
  .color{height:147px;margin-bottom:3px;margin-top:1px}
  .props{height:365px;margin-bottom:3px}
  .layers{flex:1}
  .tabs{height:27px;flex:none;display:flex;background:#424242;border-bottom:1px solid #3a3a3a;box-sizing:border-box;position:relative}
  .tab{padding:0 9px;line-height:26px;font-size:10.500px;font-weight:700;color:#9d9d9d;border-right:1px solid #383838}
  .tab.on{background:#535353;color:#ececec;margin-bottom:-1px}
  .hamb{position:absolute;right:6px;top:11px}

  .colorbody{position:relative;display:flex;padding:8px 0 0 45px;flex:1}
  .swatch{position:absolute;left:9px;top:11px;width:31px;height:31px}
  .sb{position:absolute;left:10px;top:10px;width:19px;height:19px;background:#fff;border:1px solid #222}
  .sf{position:absolute;left:1px;top:1px;width:17px;height:17px;background:#000;border:1px solid #fff;box-shadow:0 0 0 1px #333}
  .sv{width:187px;height:91px;position:relative;background:linear-gradient(to top,#000,transparent),linear-gradient(to right,#fff,#f00)}
  .svdot{position:absolute;left:-5px;bottom:-5px;width:8px;height:8px;border:1px solid #fff;border-radius:50%;clip-path:inset(0 0 5px 5px)}
  .hue{width:19px;height:91px;margin-left:17px;position:relative;background:linear-gradient(#f00 0,#f0f 17%,#00f 33%,#0ff 50%,#0f0 67%,#ff0 83%,#f00 100%)}
  .huetri{position:absolute;left:-9px;bottom:-4px;width:7px;height:8px;background:#ddd;clip-path:polygon(0 0,55% 0,100% 50%,55% 100%,0 100%)}

  .pixrow{height:34px;box-sizing:border-box;border-bottom:1px solid #3e3e3e;display:flex;align-items:center;padding-left:10px;font-size:10px;color:#dcdcdc;flex:none}
  .pixic{width:24px;height:24px;background:#3d3d3d;border-radius:3px;display:flex;align-items:center;justify-content:center;margin-right:5px;box-shadow:inset 0 0 0 1px #4c4c4c}
  .propsbody{flex:1;display:flex;min-height:0;align-items:flex-start}
  .sections{width:268px;flex:none}
  .pscroll{width:16px;height:277px;margin-top:1px;background:#4a4a4a;display:flex;flex-direction:column;align-items:center;padding-top:7px;box-sizing:border-box}
  .pthumb{width:12px;height:192px;background:#656565;margin-top:4px}
  .pdown{margin-top:auto;margin-bottom:7px}
  .sec{box-sizing:border-box;border-bottom:1px solid #3e3e3e}
  .tf{height:117px}.al{height:109px}.qa{border:0}
  .sechead{position:relative;height:30px;line-height:30px;padding-left:23px;font-size:10.500px;color:#f0f0f0}
  .sechead b{font-weight:700}
  .sechead .b2{margin-left:2px}
  :global(.secchev){position:absolute;left:7px;top:12px}
  .tfgrid{display:flex}
  .chain{margin:14px 0 0 17px}
  .tfrows{padding-left:15px;display:flex;flex-direction:column;gap:8px;margin-top:1px}
  .tfrow{display:flex;align-items:center;height:17px;font-size:10.500px;color:#777}
  .tl1{width:18px;text-align:center;margin-right:0}
  .tl2{width:30px;text-align:right;padding-right:6px;box-sizing:border-box}
  .dis{width:53px;height:17px;box-sizing:border-box;background:#474747;border:1px solid #5d5d5d;padding:0 4px;line-height:15px;color:#7a7a7a;position:relative}
  .ang{margin-top:4px;position:relative}
  .angle{margin-right:4px}
  .dd{border-radius:2px}
  :global(.ddchev){position:absolute;right:4px;top:6px}
  .flip1{margin-left:42px}
  .flip2{margin-left:13px}
  .allabel{padding-left:9px;font-size:10.500px;color:#cfcfcf;margin-top:-3px;line-height:14px}
  .alicons{display:flex;gap:13px;padding-left:13px;margin-top:12px;color:#8e8e8e}
  .alicons svg:nth-child(4){margin-left:31px}
  .more{margin:12px 0 0 177px;font-size:7px;letter-spacing:1px;color:#dedede;line-height:10px}

  .lrow{display:flex;align-items:center;box-sizing:border-box;border-bottom:1px solid #404040;flex:none}
  .filter{height:32px;padding-left:4px}
  .kind{position:relative;width:86px;height:21px;box-sizing:border-box;border:1px solid #5c5c5c;border-radius:4px;display:flex;align-items:center;padding-left:8px;gap:4px;color:#808080;font-size:10.500px}
  .ficons{display:flex;gap:8px;margin-left:10px;color:#e2e2e2}
  .toggle{width:9px;height:18px;border:1px solid #3d3d3d;border-radius:5px;margin-left:9px;position:relative;box-sizing:border-box}
  .toggle i{position:absolute;left:-1px;top:-2px;width:9px;height:9px;border-radius:50%;background:#e2e2e2}
  .blend{height:28px;padding-left:4px}
  .normal{position:relative;width:128px;height:21px;box-sizing:border-box;border:1px solid #5c5c5c;border-radius:4px;padding-left:8px;line-height:19px;color:#808080;font-size:10.500px}
  .lab{font-size:10.500px;color:#d8d8d8}
  .op{margin-left:7px;width:40px}
  .pct{width:52px;height:17px;box-sizing:border-box;border:1px solid #5c5c5c;border-radius:3px;background:#484848;line-height:15px;padding-left:5px;color:#7e7e7e;font-size:10.500px;position:relative}
  .pct em{position:absolute;right:0;top:0;bottom:0;width:15px;background:#535353;border-left:1px solid #5c5c5c;display:block;border-radius:0 3px 3px 0}
  :global(.pctchev){position:absolute;right:4px;top:5px}
  :global(.pctchev) path{stroke:#ddd}
  .lock{height:31px;padding-left:6px;border-bottom:0}
  .lk{width:30px}
  .lockicons{display:flex;gap:7px;color:#e2e2e2}
  .fl{margin-left:19px;width:18px}
  .list{flex:none;width:268px}
  .layer{display:flex}
  .one{height:34px}.two{height:40px;border-bottom:1px solid #404040}
  .eye{width:30px;display:flex;align-items:center;justify-content:center;flex:none}
  .lbody{flex:1;display:flex;align-items:center;font-size:10px;color:#ececec;border-left:1px solid #484848}
  .lbody span{margin-left:8px}
  .sel1{background:#6d6d6d;border-bottom:2px solid #484848;box-sizing:border-box;color:#f0f0f0}
  .thumb1{position:relative;width:34px;height:27px;margin-left:3px;background:repeating-conic-gradient(#c8c8c8 0 25%,#fff 0 50%) 0 0/10px 10px;box-shadow:0 0 0 1px #fff}
  .tiny{position:absolute;left:11px;top:12px;width:12px;height:3px;background:#1f6b3a}
  .tinyb{position:absolute;left:15px;top:15px;width:5px;height:2px;background:#a3c040}
  .thumb2{width:32px;height:32px;margin-left:3px;background:#fff;border:1px solid #111;box-sizing:border-box;position:relative}
  .thumb2 i{position:absolute;left:0;right:0;bottom:0;height:8px;background:#bdbdbd;border-top:1px solid #555;box-shadow:inset 0 2px 0 -1px #333}
  .lfoot{margin-top:auto;height:25px;box-sizing:border-box;border-top:1px solid #3e3e3e;display:flex;align-items:center;gap:11px;padding-left:81px;color:#dcdcdc}
  .fi{position:relative;width:16px;height:16px}
  .fi .mini{right:-3px;bottom:-3px}

  .popup{position:absolute;left:679px;top:59px;width:204px;height:236px;box-sizing:border-box;padding:2px;background:#f0f0f0;border:1px solid #b4b4b4;box-shadow:3px 3px 3px rgba(0,0,0,.55);font-family:"Open Sans",sans-serif;font-size:11.500px;color:#111;z-index:5}
  .pi{height:19px;display:flex;align-items:center}
  .pi.hi{background:#0078d7;color:#fff}
  .pi.dim{color:#6d6d6d}
  .ck{width:15px;flex:none;display:flex;justify-content:center;padding-left:1px;box-sizing:border-box}
  .pic,.noic{width:16px;height:16px;flex:none;display:block}
  .pt{margin-left:4px;white-space:nowrap}
  .sc{margin-left:auto;margin-right:16px}
  .psep{height:11px;position:relative}
  .psep::after{content:"";position:absolute;left:0;right:0;top:5px;height:1px;background:#bdbdbd}
  .s2{height:11px}
  .s2::after{top:4px}
</style>
